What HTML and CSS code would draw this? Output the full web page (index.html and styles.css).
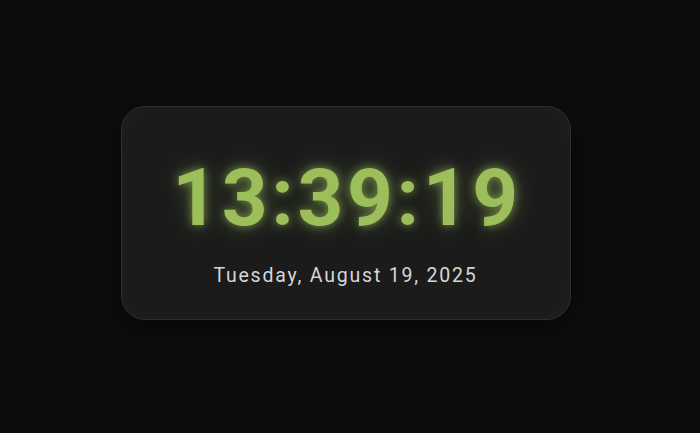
FILE: index.html
```html
<!DOCTYPE html>
<html>
<head>
<meta charset="utf-8">
<link rel="stylesheet" href="styles.css">
</head>
<body>
<div class="page">
  <div class="card">
    <div class="time">13:39:19</div>
    <div class="date">Tuesday, August 19, 2025</div>
  </div>
</div>
</body>
</html>
```
FILE: styles.css
```css
html, body {
  margin: 0;
  padding: 0;
  background: #0d0d0d;
}
.page {
  box-sizing: border-box;
  width: 700px;
  height: 433px;
  padding: 0 9px 8px 0;
  display: flex;
  align-items: center;
  justify-content: center;
}
.card {
  box-sizing: border-box;
  width: 450px;
  height: 214px;
  background: #1b1b1b;
  border: 1px solid #2e2e2e;
  border-radius: 24px;
  box-shadow: 0 8px 30px rgba(0,0,0,0.5), inset 0 0 20px rgba(255,255,255,0.02);
  display: flex;
  flex-direction: column;
  align-items: center;
  justify-content: center;
  font-family: Roboto, sans-serif;
}
.time {
  font-size: 80px;
  font-weight: 700;
  line-height: 1;
  color: #9cbf5c;
  letter-spacing: 3.6px;
  text-shadow: 0 0 10px rgba(155,191,91,0.7), 0 0 24px rgba(155,191,91,0.35);
  margin-top: 20px;
  margin-left: 3px;
}
.date {
  margin-top: 26px;
  font-size: 19.5px;
  color: #d6d6d6;
  letter-spacing: 1.8px;
}
```
